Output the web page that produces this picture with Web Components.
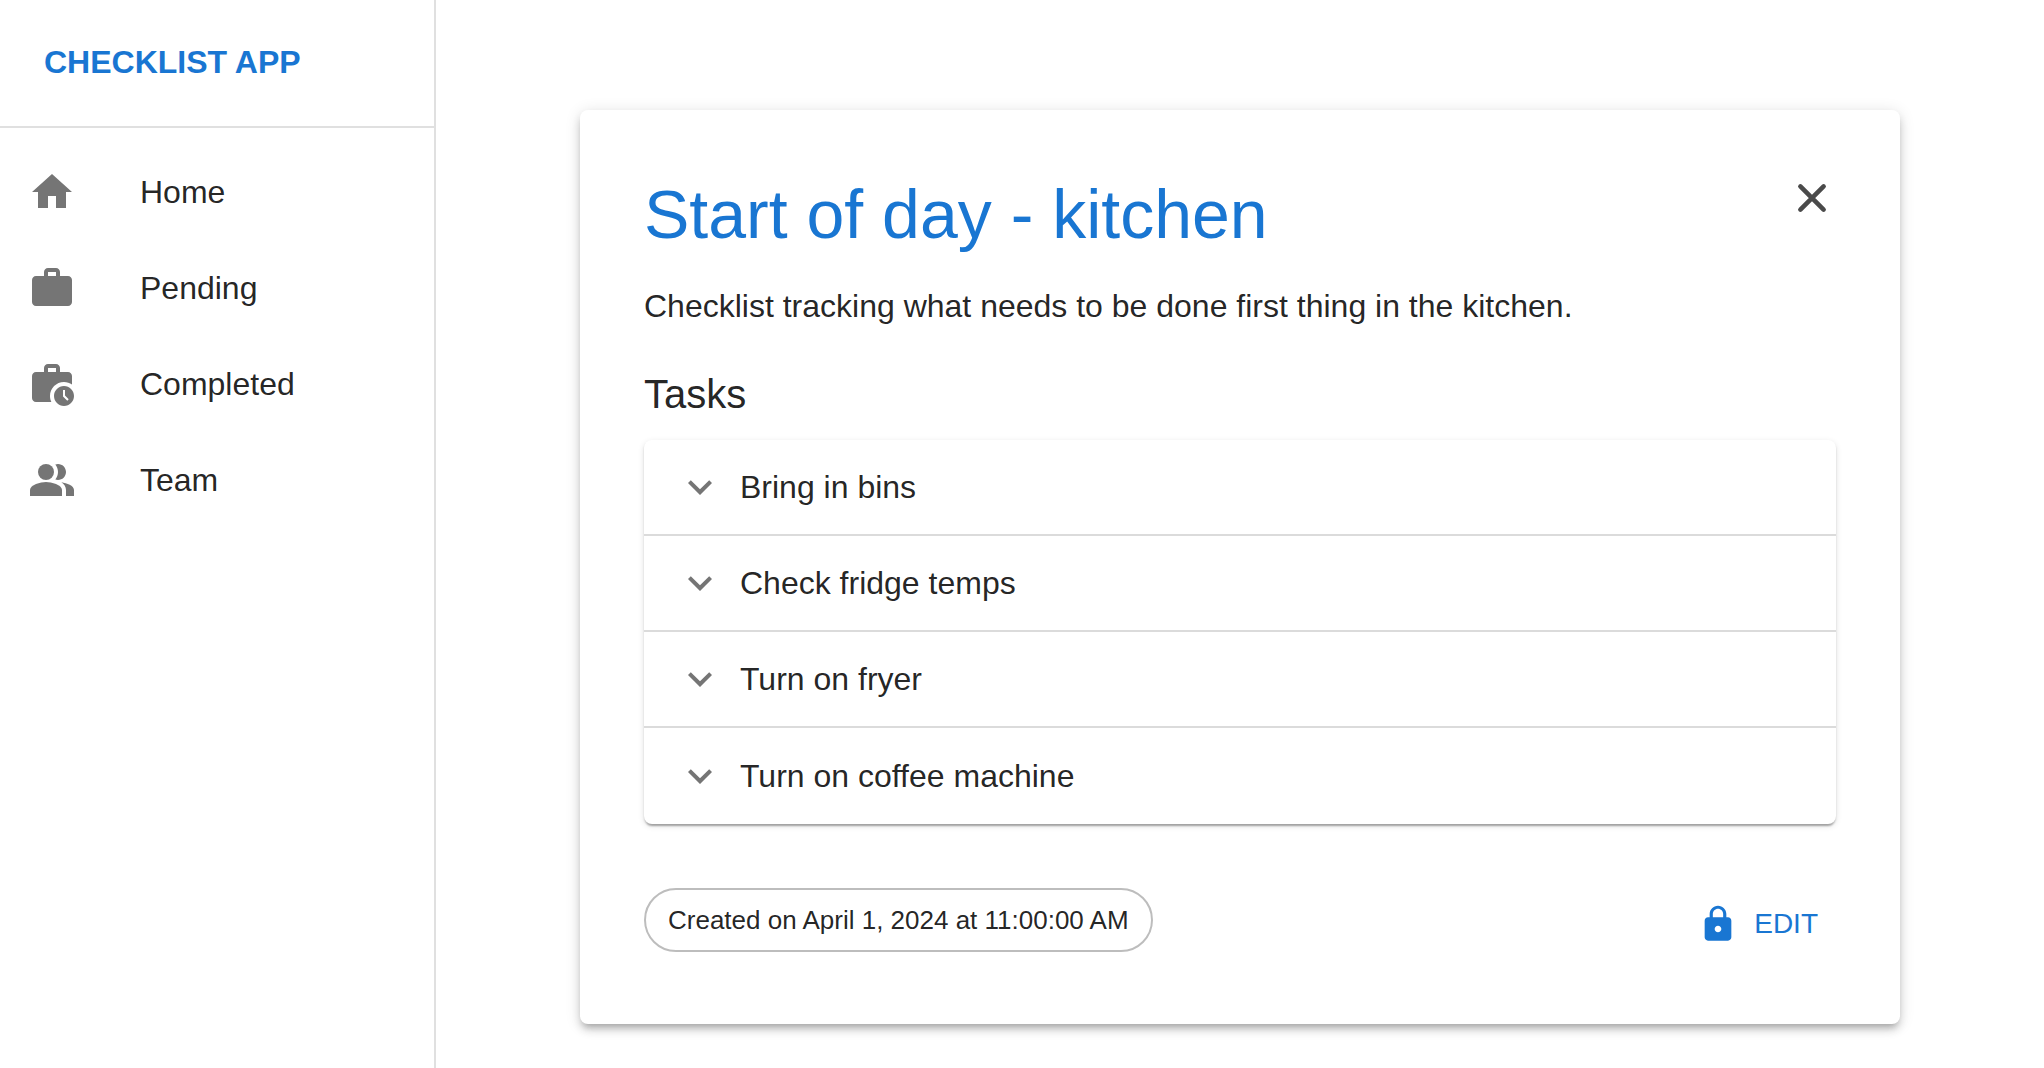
<!DOCTYPE html>
<html lang="en">
<head>
<meta charset="utf-8">
<meta name="viewport" content="width=device-width, initial-scale=1">
<title>Checklist App</title>
<style>
  body {
    margin: 0;
    background: #fff;
    color: rgba(0, 0, 0, 0.87);
    font-family: "Liberation Sans", Helvetica, Arial, sans-serif;
    font-size: 32px;
    line-height: 48px;
    --primary: #1976d2;
    --divider: #e0e0e0;
    --icon: #757575;
  }
</style>
</head>
<body>
<checklist-app></checklist-app>
<script>
const ICONS = {
  home: '<path d="M10 20v-6h4v6h5v-8h3L12 3 2 12h3v8z"/>',
  work: '<path d="M20 6h-4V4c0-1.11-.89-2-2-2h-4c-1.11 0-2 .89-2 2v2H4c-1.11 0-1.99.89-1.99 2L2 19c0 1.11.89 2 2 2h16c1.11 0 2-.89 2-2V8c0-1.11-.89-2-2-2zm-6 0h-4V4h4v2z"/>',
  history: '<path d="M18 11c1.49 0 2.87.47 4 1.26V8c0-1.11-.89-2-2-2h-4V4c0-1.11-.89-2-2-2h-4c-1.11 0-2 .89-2 2v2H4c-1.11 0-1.99.89-1.99 2L2 19c0 1.11.89 2 2 2h7.68c-.43-.91-.68-1.92-.68-3 0-3.87 3.13-7 7-7zm-8-7h4v2h-4V4z"/><path d="M18 13c-2.76 0-5 2.24-5 5s2.24 5 5 5 5-2.24 5-5-2.24-5-5-5zm1.65 7.35L17.5 18.2V15h1v2.79l1.85 1.85-.7.71z"/>',
  people: '<path d="M16.67 13.13C18.04 14.06 19 15.32 19 17v3h4v-3c0-2.18-3.57-3.47-6.33-3.87z"/><circle cx="9" cy="8" r="4"/><path d="M15 12c2.21 0 4-1.79 4-4s-1.79-4-4-4c-.47 0-.91.1-1.33.24C14.5 5.27 15 6.58 15 8s-.5 2.73-1.33 3.76c.42.14.86.24 1.33.24z"/><path d="M9 13c-2.67 0-8 1.34-8 4v3h16v-3c0-2.66-5.33-4-8-4z"/>',
  close: '<path d="M6.200 6.200 17.800 17.800M17.800 6.200 6.200 17.800" fill="none" stroke="currentColor" stroke-width="2.300" stroke-linecap="round"/>',
  expand: '<path d="M16.59 8.59 12 13.17 7.41 8.59 6 10l6 6 6-6z"/>',
  lock: '<path d="M18 8h-1V6c0-2.76-2.24-5-5-5S7 3.24 7 6v2H6c-1.1 0-2 .9-2 2v10c0 1.1.9 2 2 2h12c1.1 0 2-.9 2-2V10c0-1.1-.9-2-2-2zm-6 9c-1.1 0-2-.9-2-2s.9-2 2-2 2 .9 2 2-.9 2-2 2zm3.1-9H8.900V6c0-1.710 1.390-3.100 3.100-3.100 1.710 0 3.100 1.390 3.100 3.100v2z"/>'
};

class BaseElement extends HTMLElement {
  connectedCallback() {
    if (this.shadowRoot) return;
    this.attachShadow({ mode: 'open' }).innerHTML = this.render();
  }
}

customElements.define('app-icon', class extends BaseElement {
  render() {
    return `<style>
      :host { display: block; flex: none; width: 48px; height: 48px; }
      :host([small]) { width: 40px; height: 40px; }
      svg { display: block; width: 100%; height: 100%; fill: currentColor; }
    </style>
    <svg viewBox="0 0 24 24" aria-hidden="true">${ICONS[this.getAttribute('name')]}</svg>`;
  }
});

customElements.define('nav-item', class extends BaseElement {
  render() {
    return `<style>
      :host { display: block; }
      a { display: flex; align-items: center; gap: 64px; padding: 24px 28px; color: inherit; text-decoration: none; }
      app-icon { color: var(--icon); }
    </style>
    <a href="#"><app-icon name="${this.getAttribute('icon')}"></app-icon><span><slot></slot></span></a>`;
  }
});

customElements.define('side-nav', class extends BaseElement {
  render() {
    return `<style>
      :host { display: block; flex: none; width: 434px; border-right: 2px solid var(--divider); }
      header { padding: 38px 44px 40px; border-bottom: 2px solid var(--divider); color: var(--primary); font-weight: 700; }
      nav { padding: 16px 0; }
    </style>
    <header><slot name="brand"></slot></header>
    <nav><slot></slot></nav>`;
  }
});

customElements.define('task-row', class extends BaseElement {
  render() {
    return `<style>
      :host { display: block; }
      :host(:not(:last-child)) { border-bottom: 2px solid #dbdbdb; }
      button {
        display: flex; align-items: center; gap: 16px; box-sizing: border-box;
        width: 100%; height: 94px; margin: 0; padding: 0 32px; border: 0; background: none;
        font: inherit; color: inherit; text-align: left; cursor: pointer;
      }
      :host(:last-child) button { height: 96px; }
      app-icon { color: var(--icon); }
    </style>
    <button type="button" aria-expanded="false"><app-icon name="expand"></app-icon><span><slot></slot></span></button>`;
  }
});

customElements.define('task-list', class extends BaseElement {
  render() {
    return `<style>
      :host {
        display: block; border-radius: 8px; background: #fff;
        box-shadow: 0 4px 2px -2px rgba(0,0,0,.2), 0 2px 2px rgba(0,0,0,.14), 0 2px 6px rgba(0,0,0,.12);
      }
    </style><slot></slot>`;
  }
});

customElements.define('info-chip', class extends BaseElement {
  render() {
    return `<style>
      :host {
        display: block; box-sizing: border-box; padding: 6px 22px; border: 2px solid #bdbdbd;
        border-radius: 32px; font-size: 26px; line-height: 48px; white-space: nowrap;
      }
    </style><slot></slot>`;
  }
});

customElements.define('text-button', class extends BaseElement {
  render() {
    return `<style>
      :host { display: block; }
      button {
        display: flex; align-items: center; gap: 16px; margin: 0; padding: 12px 18px; border: 0;
        background: none; color: var(--primary); font: inherit; font-size: 28px; cursor: pointer;
      }
    </style>
    <button type="button"><app-icon name="${this.getAttribute('icon')}" small></app-icon><span><slot></slot></span></button>`;
  }
});

customElements.define('checklist-card', class extends BaseElement {
  render() {
    return `<style>
      :host {
        display: block; padding: 64px; border-radius: 8px; background: #fff;
        box-shadow: 0 6px 6px -4px rgba(0,0,0,.2), 0 6px 8px rgba(0,0,0,.14), 0 2px 16px rgba(0,0,0,.12);
      }
      .top { display: flex; justify-content: space-between; align-items: flex-start; }
      h1 { margin: 0; color: var(--primary); font-size: 68px; line-height: 80px; font-weight: 400; }
      .close { margin: 0; padding: 0; border: 0; background: none; color: #4a4a4a; cursor: pointer; }
      p { margin: 28px 0 32px; }
      h2 { margin: 0 0 14px; font-size: 40px; line-height: 64px; font-weight: 400; }
      footer { display: flex; justify-content: space-between; align-items: flex-start; padding-top: 64px; }
    </style>
    <div class="top">
      <h1><slot name="title"></slot></h1>
      <button class="close" type="button" aria-label="Close"><app-icon name="close"></app-icon></button>
    </div>
    <p><slot name="description"></slot></p>
    <h2>Tasks</h2>
    <slot></slot>
    <footer><slot name="created"></slot><slot name="action"></slot></footer>`;
  }
});

customElements.define('checklist-app', class extends BaseElement {
  render() {
    return `<style>
      :host { display: flex; min-height: 100vh; }
      main { flex: 1; min-width: 0; padding: 110px 144px 40px; }
    </style>
    <side-nav>
      <span slot="brand">CHECKLIST APP</span>
      <nav-item icon="home">Home</nav-item>
      <nav-item icon="work">Pending</nav-item>
      <nav-item icon="history">Completed</nav-item>
      <nav-item icon="people">Team</nav-item>
    </side-nav>
    <main>
      <checklist-card>
        <span slot="title">Start of day - kitchen</span>
        <span slot="description">Checklist tracking what needs to be done first thing in the kitchen.</span>
        <task-list>
          <task-row>Bring in bins</task-row>
          <task-row>Check fridge temps</task-row>
          <task-row>Turn on fryer</task-row>
          <task-row>Turn on coffee machine</task-row>
        </task-list>
        <info-chip slot="created">Created on April 1, 2024 at 11:00:00 AM</info-chip>
        <text-button slot="action" icon="lock">EDIT</text-button>
      </checklist-card>
    </main>`;
  }
});
</script>
</body>
</html>
